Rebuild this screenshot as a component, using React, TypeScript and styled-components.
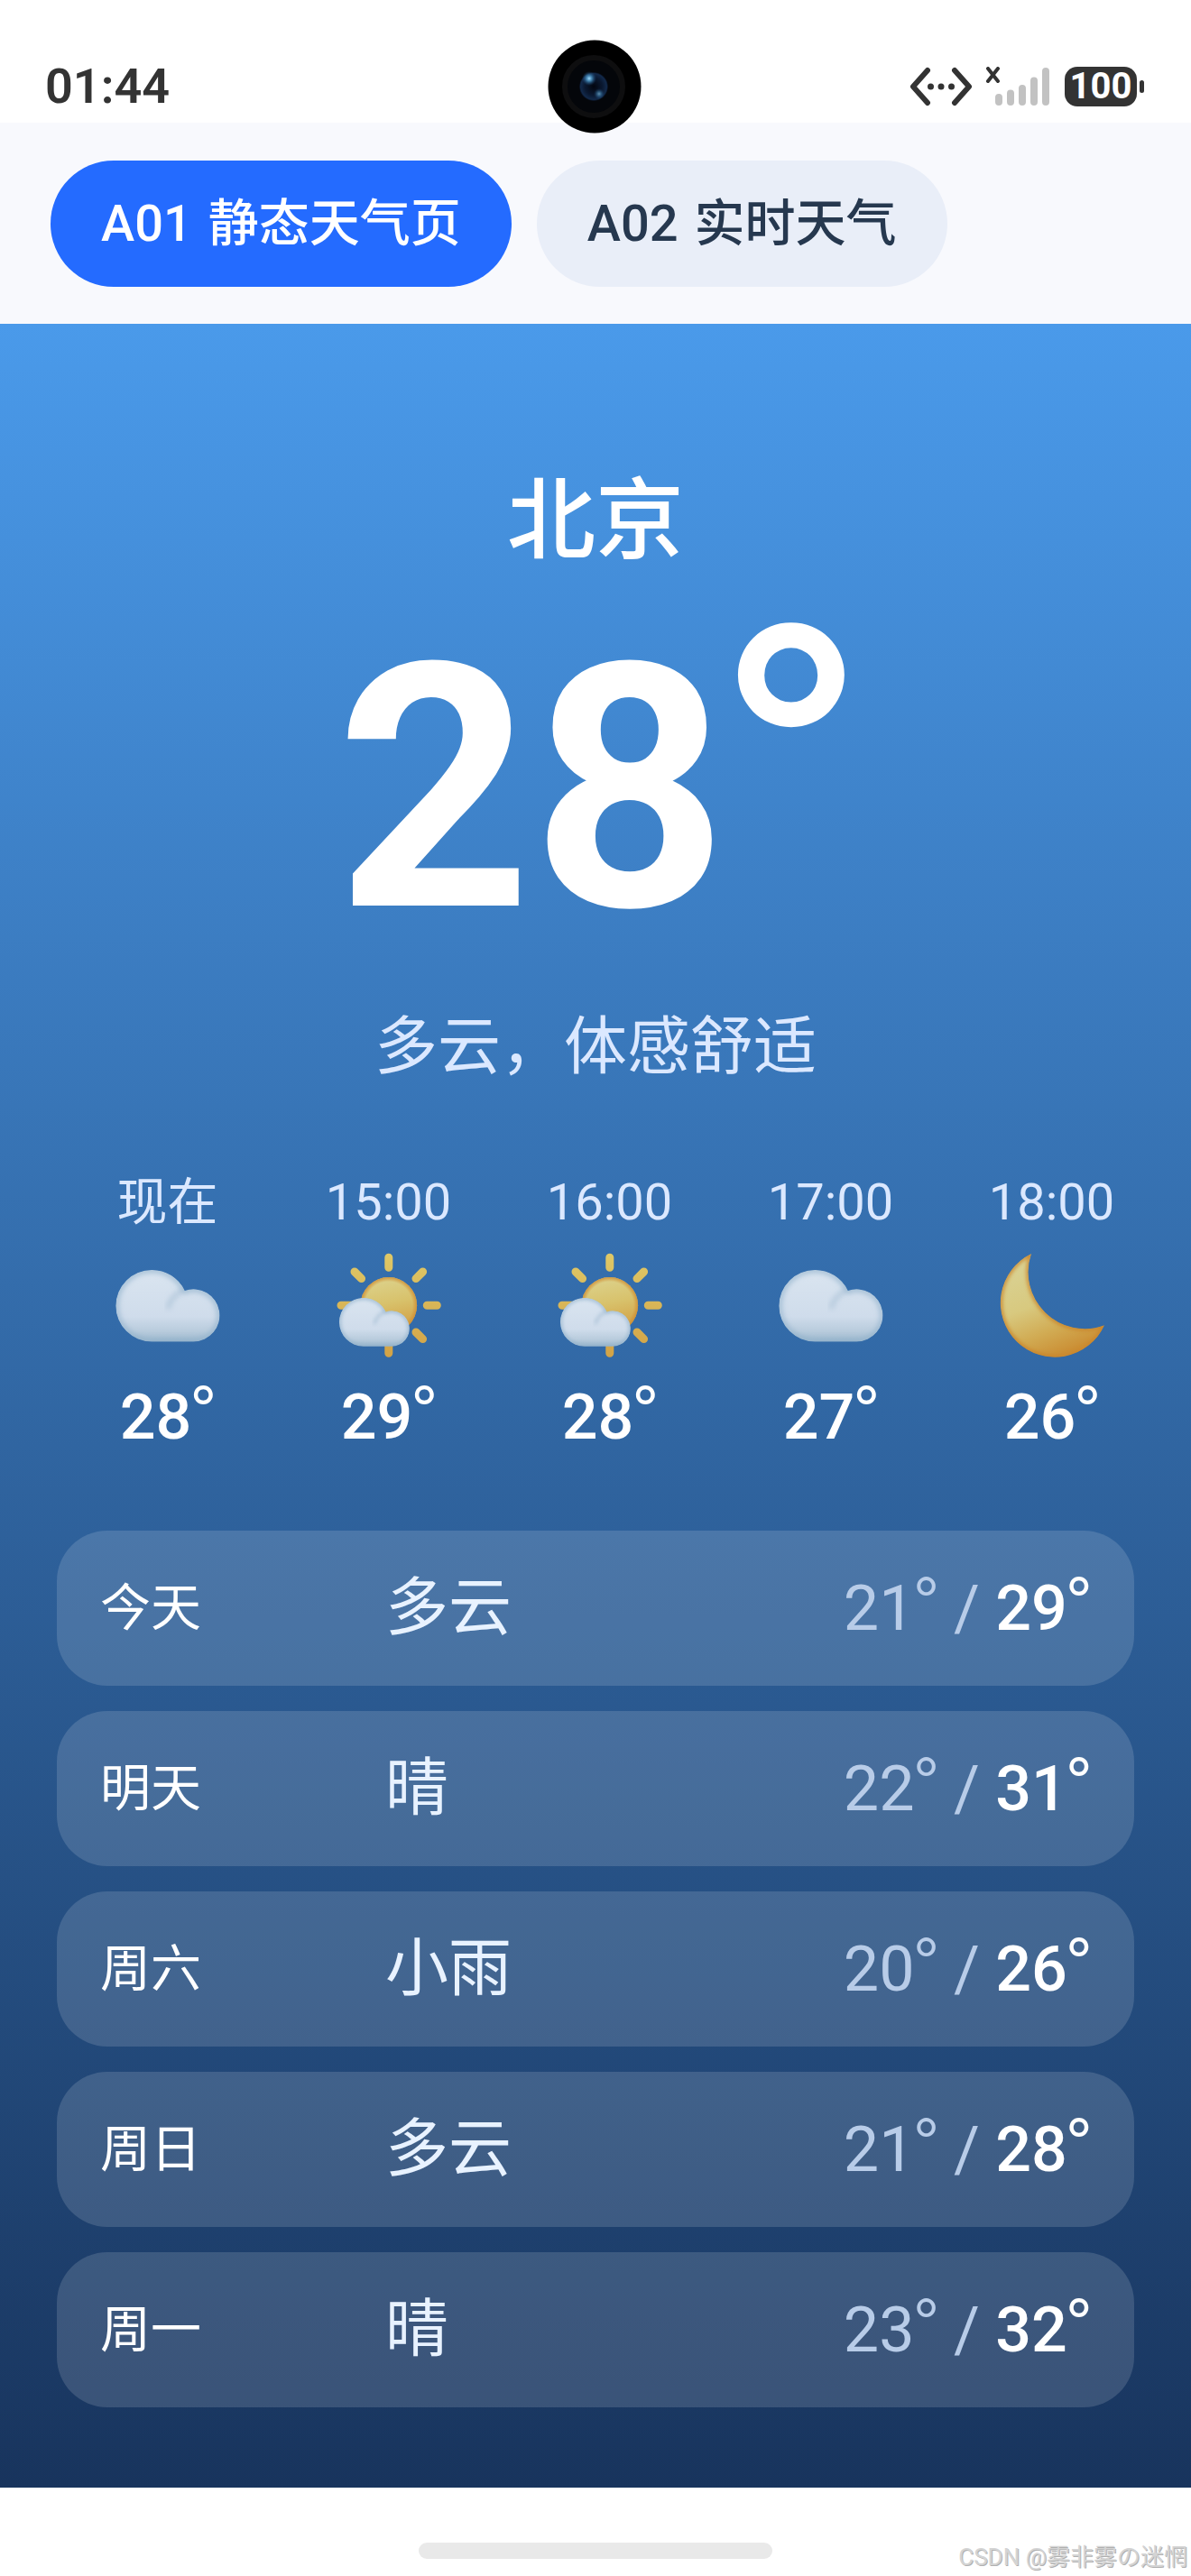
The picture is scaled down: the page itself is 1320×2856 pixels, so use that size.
import { ReactNode, useState } from "react";
import styled, { createGlobalStyle } from "styled-components";

const GlobalStyle = createGlobalStyle`
  * {
    box-sizing: border-box;
  }

  body {
    margin: 0;
    background: #fff;
  }

  body, button {
    font-family: Roboto, "Noto Sans CJK SC", sans-serif;
  }

  h1, p, ul {
    margin: 0;
    padding: 0;
    font-weight: 400;
  }
`;

const Phone = styled.div`
  display: flex;
  flex-direction: column;
  min-height: 100vh;
`;

const StatusBar = styled.header`
  display: grid;
  grid-template-columns: 1fr auto 1fr;
  align-items: center;
  height: 136px;
  padding: 44px 52px 0 50px;
  color: #333;
`;

const Clock = styled.time`
  font-size: 54px;
  line-height: 80px;
  font-weight: 600;
`;

// the lens hangs a little over the tab bar below
const Camera = styled.svg`
  position: relative;
  display: block;
  width: 104px;
  height: 104px;
`;

const StatusIcons = styled.div`
  display: flex;
  align-items: center;
  justify-content: flex-end;
`;

const StatusIcon = styled.svg<{ $gap: number }>`
  display: block;
  height: 44px;
  margin-right: ${({ $gap }) => $gap}px;
`;

const Battery = styled.span`
  display: flex;
  align-items: center;
  justify-content: center;
  width: 80px;
  height: 44px;
  border-radius: 14px;
  background: #333;
  color: #fff;
  font-size: 40px;
  line-height: 44px;
  font-weight: 700;
`;

const BatteryTip = styled.span`
  width: 5px;
  height: 14px;
  margin-left: 3px;
  border-radius: 3px;
  background: #333;
`;

const TabBar = styled.nav`
  display: flex;
  gap: 28px;
  padding: 42px 56px 41px;
  background: #f8f9fd;
`;

const Tab = styled.button<{ $active: boolean }>`
  display: flex;
  align-items: center;
  gap: 18px;
  height: 140px;
  padding: 0 56px;
  border: 0;
  border-radius: 70px;
  background: ${({ $active }) => ($active ? "#246bff" : "#e9eef8")};
  color: ${({ $active }) => ($active ? "#fff" : "#26384f")};
  font-size: 56px;
  line-height: 80px;
  font-weight: 500;
  white-space: nowrap;
  cursor: pointer;
`;

const Weather = styled.main`
  flex: 1;
  padding: 159px 63px 89px;
  background: linear-gradient(#4a9aea, #18345d);
  color: #fff;
`;

const Current = styled.section`
  display: flex;
  flex-direction: column;
  align-items: center;
`;

const City = styled.h1`
  font-size: 98px;
  line-height: 120px;
  font-weight: 500;
`;

const CurrentTemp = styled.p`
  margin-top: 51px;
  font-size: 378px;
  line-height: 372px;
  font-weight: 700;
`;

const Degree = styled.span`
  font-family: Lato, sans-serif;
  font-size: 0.9em;
  line-height: 0;
  vertical-align: 0.19em;
`;

const Summary = styled.p`
  margin-top: 58px;
  color: #dbe8ff;
  font-size: 70px;
  line-height: 84px;
`;

const Hours = styled.ul`
  display: flex;
  margin-top: 90px;
  overflow-x: auto;
  scrollbar-width: none;
  list-style: none;
`;

const Hour = styled.li`
  display: flex;
  flex: none;
  flex-direction: column;
  align-items: center;
  width: 245px;
`;

const HourLabel = styled.span`
  color: #dbe8ff;
  font-size: 56px;
  line-height: 80px;
`;

const HourIcon = styled.svg`
  display: block;
  width: 120px;
  height: 120px;
  margin: 14px 0 18px;
`;

const HourTemp = styled.span`
  font-size: 70px;
  line-height: 92px;
  font-weight: 500;
`;

const Days = styled.ul`
  display: flex;
  flex-direction: column;
  gap: 28px;
  margin-top: 80px;
  list-style: none;
`;

const Day = styled.li`
  display: grid;
  grid-template-columns: 316px 1fr auto;
  align-items: center;
  height: 172px;
  padding: 0 48px;
  border-radius: 56px;
  background: rgba(255, 255, 255, 0.14);
`;

const DayName = styled.span`
  font-size: 56px;
  line-height: 84px;
`;

const DayText = styled.span`
  color: #e8f2ff;
  font-size: 70px;
  line-height: 84px;
`;

const DayTemps = styled.span`
  color: #b8cce8;
  font-size: 70px;
  line-height: 84px;
`;

const High = styled.span`
  color: #fff;
  font-weight: 500;
`;

const HomeBar = styled.footer`
  display: grid;
  grid-template-columns: 1fr 392px 1fr;
  align-items: end;
  height: 99px;
  padding: 0 4px 6px;
`;

const Handle = styled.div`
  height: 18px;
  margin-bottom: 14px;
  border-radius: 9px;
  background: #e9e9e9;
`;

const Watermark = styled.small`
  color: #d4d4d4;
  font-size: 26px;
  line-height: 32px;
  text-align: right;
  text-shadow: 1px 1px 0 #b0b0b0;
`;

type Sky = "cloud" | "partly" | "moon";

const hours: { label: string; sky: Sky; temp: number }[] = [
  { label: "现在", sky: "cloud", temp: 28 },
  { label: "15:00", sky: "partly", temp: 29 },
  { label: "16:00", sky: "partly", temp: 28 },
  { label: "17:00", sky: "cloud", temp: 27 },
  { label: "18:00", sky: "moon", temp: 26 },
];

const days = [
  { name: "今天", text: "多云", low: 21, high: 29 },
  { name: "明天", text: "晴", low: 22, high: 31 },
  { name: "周六", text: "小雨", low: 20, high: 26 },
  { name: "周日", text: "多云", low: 21, high: 28 },
  { name: "周一", text: "晴", low: 23, high: 32 },
];

const tabs = [
  { code: "A01", label: "静态天气页" },
  { code: "A02", label: "实时天气" },
];

function Temp({ value }: { value: number }) {
  return (
    <>
      {value}
      <Degree>°</Degree>
    </>
  );
}

const cloudPath =
  "M31.8 51.9A26.9 26.9 0 0 0 31.8 105.7H63.2A19.7 19.7 0 1 0 56.6 67.4A26.9 26.9 0 0 0 31.8 51.9Z";

const moonPath = "M37 3A60.3 60.3 0 1 0 118 82.3A62.8 62.8 0 0 1 37 3Z";

const HiddenSvg = styled.svg`
  position: absolute;
  width: 0;
  height: 0;
`;

// gradients and clips shared by all the weather icons
function IconDefs() {
  return (
    <HiddenSvg aria-hidden="true">
      <defs>
        <linearGradient id="cloudFill" x1="0" y1="0" x2="0" y2="1">
          <stop offset="0" stopColor="#dae5f0" />
          <stop offset="0.65" stopColor="#cfdceb" />
          <stop offset="0.85" stopColor="#b9ccdd" />
          <stop offset="1" stopColor="#9db8cd" />
        </linearGradient>
        <clipPath id="cloudClip">
          <path d={cloudPath} />
        </clipPath>
        <clipPath id="moonClip">
          <path d={moonPath} />
        </clipPath>
        <filter id="soft" x="-20%" y="-20%" width="140%" height="140%">
          <feGaussianBlur stdDeviation="2" />
        </filter>
        <linearGradient id="sunFill" x1="0.4" y1="0" x2="0.6" y2="1">
          <stop offset="0" stopColor="#dcd28c" />
          <stop offset="0.45" stopColor="#d8c26c" />
          <stop offset="1" stopColor="#d19b3f" />
        </linearGradient>
        <radialGradient id="sunEdge">
          <stop offset="0.84" stopColor="#cf8f35" stopOpacity="0" />
          <stop offset="1" stopColor="#cf8f35" stopOpacity="0.9" />
        </radialGradient>
        <linearGradient id="rays" x1="0" y1="0" x2="0" y2="120" gradientUnits="userSpaceOnUse">
          <stop offset="0" stopColor="#dfc968" />
          <stop offset="1" stopColor="#d2a246" />
        </linearGradient>
        <linearGradient id="moonFill" x1="0.15" y1="0.1" x2="0.5" y2="1">
          <stop offset="0" stopColor="#d9d294" />
          <stop offset="0.45" stopColor="#d8c97f" />
          <stop offset="0.75" stopColor="#d1ab53" />
          <stop offset="1" stopColor="#cb8f35" />
        </linearGradient>
      </defs>
    </HiddenSvg>
  );
}

function CloudShape() {
  return (
    <g clipPath="url(#cloudClip)">
      <path d={cloudPath} fill="url(#cloudFill)" />
      <path
        d="M57 66.5C50.5 69 45.5 74 44 81"
        fill="none"
        stroke="#9fb9d0"
        strokeWidth="2"
        filter="url(#soft)"
      />
      <path d={cloudPath} fill="none" stroke="#8fb0cb" strokeWidth="3" filter="url(#soft)" />
    </g>
  );
}

const drawings: Record<Sky, ReactNode> = {
  cloud: (
    <g transform="translate(-4.9 -55.7) scale(1.478)">
      <CloudShape />
    </g>
  ),
  partly: (
    <g>
      <path
        d="M59.8 7.3V18.2M59.8 102V113.3M102.3 60.3H113.3M7 60.3H18M90 30.6L97.6 23M29.6 30.6L22 23M90 90L97.6 97.6"
        stroke="url(#rays)"
        strokeWidth="9"
        strokeLinecap="round"
        fill="none"
      />
      <circle cx="59.8" cy="60.3" r="31.3" fill="url(#sunFill)" />
      <circle cx="59.8" cy="60.3" r="31.3" fill="url(#sunEdge)" />
      <CloudShape />
    </g>
  ),
  moon: (
    <g clipPath="url(#moonClip)">
      <path d={moonPath} fill="url(#moonFill)" />
      <path d={moonPath} fill="none" stroke="#c9842b" strokeWidth="4" filter="url(#soft)" />
    </g>
  ),
};

function FrontCamera() {
  return (
    <Camera viewBox="0 0 104 104" aria-hidden="true">
      <defs>
        <radialGradient id="lens">
          <stop offset="0" stopColor="#02050f" />
          <stop offset="0.6" stopColor="#0a1830" />
          <stop offset="0.9" stopColor="#12294a" />
          <stop offset="1" stopColor="#050a14" />
        </radialGradient>
        <radialGradient id="glint">
          <stop offset="0" stopColor="#9fdcff" />
          <stop offset="0.4" stopColor="#4a94c4" stopOpacity="0.8" />
          <stop offset="1" stopColor="#1c4a7c" stopOpacity="0" />
        </radialGradient>
      </defs>
      <circle cx="52" cy="52" r="51.5" fill="#000" />
      <circle cx="51" cy="52" r="32" fill="#04060a" stroke="#0e0e0f" strokeWidth="6" />
      <circle cx="51" cy="52" r="16" fill="url(#lens)" />
      <circle cx="46" cy="43" r="8" fill="url(#glint)" />
      <circle cx="57" cy="60" r="6" fill="url(#glint)" opacity="0.6" />
    </Camera>
  );
}

export default function App() {
  const [active, setActive] = useState("A01");

  return (
    <Phone>
      <GlobalStyle />
      <IconDefs />
      <StatusBar>
        <Clock>01:44</Clock>
        <FrontCamera />
        <StatusIcons>
          <StatusIcon $gap={15} width="70" viewBox="0 0 70 44" aria-hidden="true">
            <path
              d="M20 4L4 22L20 40M50 4L66 22L50 40"
              fill="none"
              stroke="#333"
              strokeWidth="6"
              strokeLinecap="round"
              strokeLinejoin="round"
            />
            <g fill="#333">
              <circle cx="23.5" cy="22" r="3.5" />
              <circle cx="35" cy="22" r="3.5" />
              <circle cx="46.5" cy="22" r="3.5" />
            </g>
          </StatusIcon>
          <StatusIcon $gap={17} width="70" viewBox="0 0 70 44" aria-hidden="true">
            <path d="M2 2L13 16M13 2L2 16" stroke="#333" strokeWidth="4" strokeLinecap="round" />
            <path
              d="M14 34V39M27 29.5V39M40 24V39M53 15.5V39M66 5V39"
              stroke="#c2c2c2"
              strokeWidth="8"
              strokeLinecap="round"
            />
          </StatusIcon>
          <Battery>100</Battery>
          <BatteryTip />
        </StatusIcons>
      </StatusBar>
      <TabBar>
        {tabs.map(({ code, label }) => (
          <Tab key={code} type="button" $active={active === code} onClick={() => setActive(code)}>
            <span>{code}</span>
            <span>{label}</span>
          </Tab>
        ))}
      </TabBar>
      <Weather>
        <Current>
          <City>北京</City>
          <CurrentTemp>
            <Temp value={28} />
          </CurrentTemp>
          <Summary>多云，体感舒适</Summary>
        </Current>
        <Hours>
          {hours.map(({ label, sky, temp }) => (
            <Hour key={label}>
              <HourLabel>{label}</HourLabel>
              <HourIcon viewBox="0 0 120 120" aria-hidden="true">
                {drawings[sky]}
              </HourIcon>
              <HourTemp>
                <Temp value={temp} />
              </HourTemp>
            </Hour>
          ))}
        </Hours>
        <Days>
          {days.map(({ name, text, low, high }) => (
            <Day key={name}>
              <DayName>{name}</DayName>
              <DayText>{text}</DayText>
              <DayTemps>
                <Temp value={low} /> /{" "}
                <High>
                  <Temp value={high} />
                </High>
              </DayTemps>
            </Day>
          ))}
        </Days>
      </Weather>
      <HomeBar>
        <span />
        <Handle />
        <Watermark>CSDN @雾非雾の迷惘</Watermark>
      </HomeBar>
    </Phone>
  );
}
